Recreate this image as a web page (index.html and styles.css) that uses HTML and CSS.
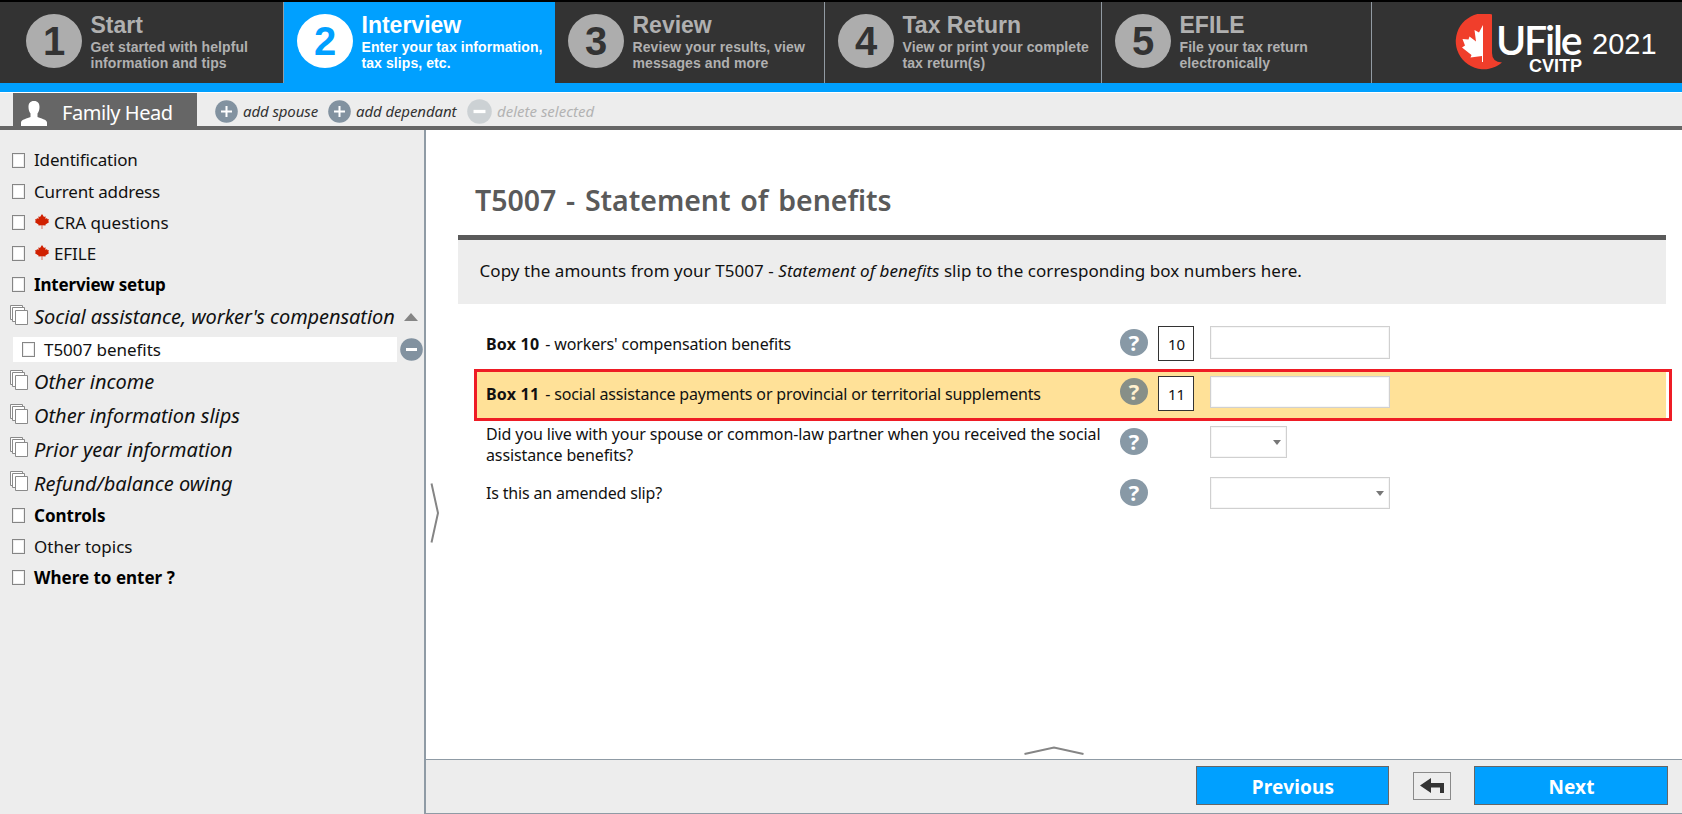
FILE: index.html
```html
<!DOCTYPE html>
<html lang="en">
<head>
<meta charset="utf-8">
<title>UFile CVITP 2021</title>
<link rel="stylesheet" href="styles.css">
</head>
<body>
<svg class="defs" aria-hidden="true">
  <symbol id="plus" viewBox="0 0 23 23"><circle cx="11.5" cy="11.5" r="11.3"/><path d="M11.5 6v11M6 11.5h11" stroke="#fff" stroke-width="2"/></symbol>
  <symbol id="minus" viewBox="0 0 23 23"><circle cx="11.5" cy="11.5" r="11.3"/><path d="M6 11.5h11" stroke="#fff" stroke-width="3"/></symbol>
  <symbol id="leaf" viewBox="0 0 14 15"><path d="M7 0l2 3 1.500-.7v2.700l1.500-1 .5 1.200 1.500.1-.7 1.700.7 1.200-3.500 2.300v1l-3-.3h-1l-3 .3v-1L0 8.200 .7 7 0 5.300l1.500-.1.5-1.200 1.500 1V2.300L5 3z"/><path d="M6.500 10.500h1V15h-1z" opacity=".6"/></symbol>
  <symbol id="stack" viewBox="0 0 18 20"><g fill="#fff" stroke="#8a8a8a"><path d="M.5.5h12v14H.5z"/><path d="M2.500 2.500h12v14h-12z"/><path d="M5.500 5.500h12v14h-12z"/></g></symbol>
</svg>
<header class="steps">
  <div class="step s1"><b class="num">1</b><div><h2>Start</h2><p>Get started with helpful<br>information and tips</p></div></div>
  <div class="step s2 active"><b class="num">2</b><div><h2>Interview</h2><p>Enter your tax information,<br>tax slips, etc.</p></div></div>
  <div class="step s3"><b class="num">3</b><div><h2>Review</h2><p>Review your results, view<br>messages and more</p></div></div>
  <div class="step s4"><b class="num">4</b><div><h2>Tax Return</h2><p>View or print your complete<br>tax return(s)</p></div></div>
  <div class="step s5"><b class="num">5</b><div><h2>EFILE</h2><p>File your tax return<br>electronically</p></div></div>
  <div class="brand">
    <svg class="mark" viewBox="0 0 48 56"><path fill="#f03e2b" d="M37 .5V39q0 9 10 9.500A28 28 0 1 1 37 .5z"/><path fill="#fff" d="M28 11l-4 7.500-4.500-2.500 1.500 11.500-6.500-5-1 3-6-.5 2.500 6.500L7 33.500l9.500 7.500-1 2.500L27 42v6h1z"/></svg>
    <div class="name"><div class="ufile">UFile</div><div class="cvitp">CVITP</div></div>
    <div class="year">2021</div>
  </div>
</header>
<nav class="people">
  <div class="tab"><svg class="person" viewBox="0 0 26 25"><path fill="#fff" d="M13 0c4 0 5.500 2.500 5.500 6 0 3-.8 5-2 6.500V16c3 1.500 9.500 2.500 9.500 5.500V25H0v-3.500C0 18.500 6.500 17.500 9.500 16v-3.500C8.300 11 7.500 9 7.500 6c0-3.500 1.500-6 5.500-6z"/></svg><span>Family Head</span></div>
  <a class="act a1"><svg><use href="#plus"/></svg><span>add spouse</span></a>
  <a class="act a2"><svg><use href="#plus"/></svg><span>add dependant</span></a>
  <a class="act off"><svg><use href="#minus"/></svg><span>delete selected</span></a>
</nav>
<div class="body">
  <aside class="side">
    <div class="item first"><i class="box"></i><span>Identification</span></div>
    <div class="item tight"><i class="box"></i><span>Current address</span></div>
    <div class="item flagged"><i class="box"></i><svg class="leaf"><use href="#leaf"/></svg><span>CRA questions</span></div>
    <div class="item"><i class="box"></i><svg class="leaf"><use href="#leaf"/></svg><span>EFILE</span></div>
    <div class="item strong tight"><i class="box"></i><span>Interview setup</span></div>
    <div class="item group"><svg class="stack"><use href="#stack"/></svg><span>Social assistance, worker's compensation</span><i class="up"></i></div>
    <div class="child"><div class="sel"><i class="box"></i><span>T5007 benefits</span></div><svg class="remove"><use href="#minus"/></svg></div>
    <div class="item group loose"><svg class="stack"><use href="#stack"/></svg><span>Other income</span></div>
    <div class="item group loose"><svg class="stack"><use href="#stack"/></svg><span>Other information slips</span></div>
    <div class="item group loose"><svg class="stack"><use href="#stack"/></svg><span>Prior year information</span></div>
    <div class="item group loose"><svg class="stack"><use href="#stack"/></svg><span>Refund/balance owing</span></div>
    <div class="item strong loose"><i class="box"></i><span>Controls</span></div>
    <div class="item loose"><i class="box"></i><span>Other topics</span></div>
    <div class="item strong loose"><i class="box"></i><span>Where to enter ?</span></div>
  </aside>
  <main class="main">
    <div class="content">
      <svg class="handle-left" viewBox="0 0 10 60"><path d="M1.500 .5l6.500 29.500-6.500 29.500" fill="none" stroke="#858585" stroke-width="2"/></svg>
      <h1>T5007 - Statement of benefits</h1>
      <div class="intro">Copy the amounts from your T5007 - <em>Statement of benefits</em> slip to the corresponding box numbers here.</div>
      <div class="row r1"><label><b>Box 10</b> - workers' compensation benefits</label><i class="help">?</i><div class="code">10</div><input class="field"></div>
      <div class="row r2"><label><b>Box 11</b> - social assistance payments or provincial or territorial supplements</label><i class="help">?</i><div class="code">11</div><input class="field"></div>
      <div class="row r3"><label>Did you live with your spouse or common-law partner when you received the social<br>assistance benefits?</label><i class="help">?</i><div></div><div class="field pick short"></div></div>
      <div class="row r4"><label>Is this an amended slip?</label><i class="help">?</i><div></div><div class="field pick"></div></div>
    </div>
    <footer class="foot">
      <svg class="handle-bottom" viewBox="0 0 60 9"><path d="M.5 8L30 1.500 59.500 8" fill="none" stroke="#858585" stroke-width="2"/></svg>
      <button class="btn prev">Previous</button>
      <button class="back"><svg viewBox="0 0 24 16"><path fill="#333" d="M0 7.500L11 0v5h13v10h-4V9.500h-9V15z"/></svg></button>
      <button class="btn next">Next</button>
    </footer>
  </main>
</div>
</body>
</html>
```
FILE: styles.css
```css
* { box-sizing: border-box; }
body { margin: 0; width: 1682px; height: 814px; overflow: hidden; display: flex; flex-direction: column; background: #fff; color: #111; font-family: "Noto Sans", "Open Sans", sans-serif; font-size: 17px; }
h1, h2, p { margin: 0; }
.defs { display: none; }
svg { flex: none; }

.steps { flex: none; height: 92px; display: flex; background: #333; border-bottom: 9px solid #00a0ff; border-top: 2px solid #000; font-family: "Liberation Sans", Arial, sans-serif; color: #b0b0b0; }
.step { display: flex; padding: 12px 0 0 13px; border-right: 1px solid #929ba3; }
.s1 { width: 284px; padding-left: 26px; }
.s2 { width: 271px; border-right: 0; }
.s3 { width: 270px; }
.s4 { width: 277px; }
.s5 { width: 270px; }
.active { background: #00a0ff; color: #fff; }
.num { flex: none; width: 56px; height: 54px; margin-right: 8.500px; border-radius: 50%; background: #adadad; color: #333; font-size: 40px; line-height: 54px; text-align: center; }
.active .num { background: #fff; color: #00a0ff; }
.step h2 { font-size: 23px; line-height: 26px; margin-top: -2px; }
.step p { font-size: 14px; line-height: 16px; font-weight: bold; margin-top: 1px; letter-spacing: .08px; white-space: nowrap; }

.brand { display: flex; padding: 12px 0 0 83px; color: #fff; }
.mark { width: 48px; height: 56px; }
.name { width: 86px; margin-left: -7px; }
.ufile { font: 600 41px/32px Lato, sans-serif; height: 42px; padding-top: 10px; letter-spacing: -2.200px; white-space: nowrap; }
.cvitp { font-weight: bold; font-size: 18px; line-height: 18px; margin-top: 1px; text-align: right; }
.year { font-size: 29px; margin: 13px 0 0 10px; line-height: 34px; }

.people { flex: none; height: 38px; display: flex; background: #ededed; border-top: 1px solid #fff; border-bottom: 4px solid #666; }
.tab { width: 184px; margin-left: 13px; background: #666; color: #fff; font-size: 20px; letter-spacing: -.45px; display: flex; align-items: center; padding-left: 8px; }
.tab span { padding-top: 5px; }
.person { width: 26px; height: 25px; margin: 7px 15px 0 0; }
.act { display: flex; align-items: center; gap: 5px; font-style: italic; font-size: 15px; letter-spacing: -.1px; color: #333; padding-bottom: 4px; height: 41px; }
.act span { margin-top: -2px; }
.act svg { width: 23px; height: 23px; fill: #8292a0; }
.a1 { margin-left: 18px; width: 113px; }
.a2 { width: 139px; }
.off { color: #b3b3b3; letter-spacing: 0; }
.off svg { width: 25px; height: 25px; fill: #ccd1d4; }

.body { flex: 1; display: flex; min-height: 0; }
.side { width: 426px; background: #ededed; border-right: 2px solid #8f9ba5; padding-top: 15px; color: #111; }
.item { height: 31px; display: flex; align-items: center; padding-left: 12px; letter-spacing: -.08px; white-space: nowrap; }
.first span { margin-top: -2px; }
.first, .tight { letter-spacing: -.17px; }
.flagged { letter-spacing: 0; }
.box { flex: none; width: 13px; height: 15px; margin-right: 9px; border: 1px solid #858585; background: #fff; box-shadow: inset 0 0 0 1px #eee; }
.leaf { width: 14px; height: 15px; margin: -3px 5px 0 1px; fill: #d02000; }
.strong { font-weight: bold; color: #000; }
.group { height: 33.500px; padding-left: 10px; font-size: 20px; font-style: italic; }
.loose { letter-spacing: 0; }
.group.loose { height: 33.750px; }
.stack { width: 18px; height: 20px; margin: -4px 6px 0 0; }
.up { border: 7px solid transparent; border-top: 0; border-bottom: 8px solid #858585; margin-left: 9px; }
.child { display: flex; align-items: center; margin: 3px 0 3.500px 13px; gap: 3px; letter-spacing: -.04px; }
.sel { width: 384px; height: 25px; background: #fff; display: flex; align-items: center; padding-left: 9px; }
.remove { width: 23px; height: 23px; fill: #8292a0; }

.main { flex: 1; display: flex; flex-direction: column; min-width: 0; }
.content { flex: 1; position: relative; padding: 45px 16px 0 32px; min-height: 0; overflow: hidden; }
.handle-left { position: absolute; left: 4px; top: 353px; width: 10px; height: 60px; }
h1 { height: 60px; padding-left: 17px; font-size: 28.500px; letter-spacing: -.05px; word-spacing: 2.500px; line-height: 50px; font-weight: 600; color: #5a5a5a; white-space: nowrap; }
.intro { height: 69px; border-top: 5px solid #5a5a5a; background: #ededed; padding-left: 21.500px; line-height: 62px; letter-spacing: .05px; white-space: nowrap; }
.row { display: grid; grid-template-columns: 634px 38px 52px 180px; align-items: start; padding-left: 28px; font-size: 16px; line-height: 21px; letter-spacing: -.13px; white-space: nowrap; height: 50px; }
.row b { margin-right: 2px; letter-spacing: .2px; }
.r1 { margin-top: 22px; height: 43px; }
.row label { padding-top: 8px; }
.r2 { height: 52px; width: 1198px; margin-left: 16px; padding: 4px 0 0 9px; letter-spacing: -.16px; border: 3px solid #ee1c25; background: linear-gradient(#ffe198, #ffe198) 0 0 / 1189px 100% no-repeat; }
.r3 { height: 52px; padding-top: 5px; letter-spacing: -.11px; }
.r3 label { padding-top: 0; margin-top: -2px; }
.r4 { padding-top: 4px; letter-spacing: -.18px; }
.r4 label { padding-top: 6px; }
.help { width: 28px; height: 27px; margin-top: 2px; border-radius: 50%; background: #8899a6; color: #fff; font: bold 22px/27px "Open Sans", sans-serif; text-align: center; }
.r1 .help { margin-top: 3px; }
.r2 .help { background: #878f88; color: #fff1d0; }
.code { width: 36px; height: 35px; border: 1px solid #333; background: #fff; text-align: center; line-height: 34px; font-size: 15px; padding-left: 1px; }
.field { display: block; width: 180px; height: 32px; border: 1px solid #d0d0d0; background: #fff; padding: 0; box-shadow: inset 0 0 0 1px #f6f6f6; }
.r1 .field { height: 33px; }
.pick { display: flex; align-items: center; justify-content: flex-end; padding-right: 5px; }
.pick::after { content: ""; border: 4.500px solid transparent; border-top: 5px solid #777; border-bottom: 0; }
.short { width: 77px; }

.foot { position: relative; flex: none; height: 55px; display: flex; align-items: flex-start; background: #ededed; border-top: 1px solid #8f9ba5; border-bottom: 1px solid #8f9ba5; padding: 6px 14px 0 770px; }
.handle-bottom { position: absolute; left: 598px; top: -14px; width: 60px; height: 9px; }
.btn { width: 193px; height: 39px; border: 1px solid #666; background: #00a0ff; color: #fff; font: bold 19px/36px "Noto Sans", sans-serif; letter-spacing: .15px; padding: 2px 0 0 1px; }
.back { width: 38px; height: 28px; margin: 6px 23px 0 24px; border: 1px solid #8a8a8a; background: #ededed; padding: 0; display: flex; align-items: center; justify-content: center; }
.back svg { width: 24px; height: 16px; }
.next { width: 194px; }
```
